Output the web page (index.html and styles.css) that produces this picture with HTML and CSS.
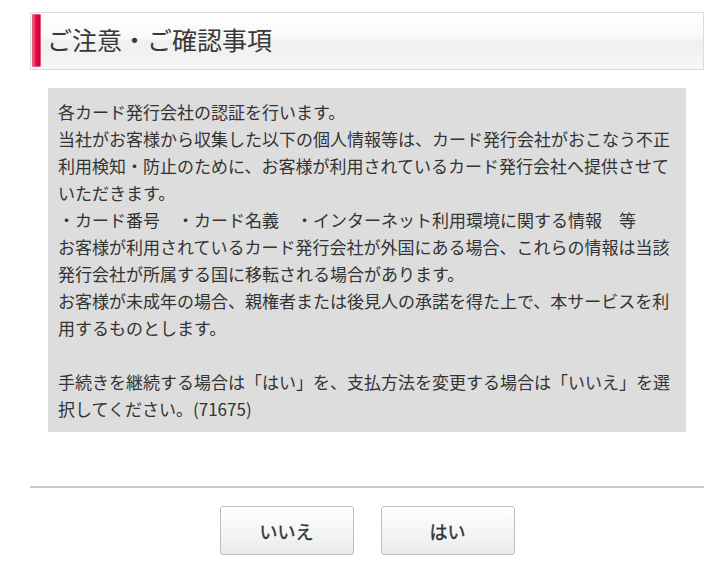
FILE: index.html
```html
<!DOCTYPE html>
<html lang="ja">
<head>
<meta charset="utf-8">
<title>ご注意・ご確認事項</title>
<link rel="stylesheet" href="styles.css">
</head>
<body>
<div class="page">
  <div class="heading">
    <span class="heading-bar"></span>
    <h1 class="heading-title">ご注意・ご確認事項</h1>
  </div>
  <div class="notice">
    <p>各カード発行会社の認証を行います。<br>当社がお客様から収集した以下の個人情報等は、カード発行会社がおこなう不正利用検知・防止のために、お客様が利用されているカード発行会社へ提供させていただきます。<br>・カード番号　・カード名義　・インターネット利用環境に関する情報　等<br>お客様が利用されているカード発行会社が外国にある場合、これらの情報は当該発行会社が所属する国に移転される場合があります。<br>お客様が未成年の場合、親権者または後見人の承諾を得た上で、本サービスを利用するものとします。<br><br>手続きを継続する場合は「はい」を、支払方法を変更する場合は「いいえ」を選択してください。(71675)</p>
  </div>
  <hr class="divider">
  <div class="actions">
    <button class="btn" type="button">いいえ</button>
    <button class="btn" type="button">はい</button>
  </div>
</div>
</body>
</html>
```
FILE: styles.css
```css
html, body {
  margin: 0;
  padding: 0;
  background: #fff;
}
body {
  font-family: "Noto Sans CJK JP", "Noto Sans", sans-serif;
  color: #333;
}
.page {
  margin-left: 30px;
  width: 674px;
  padding-top: 12px;
}
.heading {
  box-sizing: border-box;
  height: 58px;
  border: 1px solid #dcdcdc;
  background: linear-gradient(to bottom, #ffffff 0%, #f8f8f8 45%, #f0f0f0 50%, #f2f2f2 75%, #f7f7f7 100%);
  display: flex;
  align-items: center;
  padding: 1px 0 2px 1px;
}
.heading-bar {
  align-self: stretch;
  width: 9px;
  box-sizing: border-box;
  border: 1px solid #e8557a;
  border-radius: 1px;
  background: linear-gradient(to right, #f4678a 0%, #e0144a 40%, #cc0036 100%);
}
.heading-title {
  margin: 0 0 4px 6px;
  font-size: 25px;
  font-weight: normal;
  line-height: 30px;
  color: #383838;
}
.notice {
  margin: 18px 18px 0 18px;
  background: #dddddd;
  padding: 10px 10px;
}
.notice p {
  margin: 0;
  font-size: 17px;
  line-height: 27px;
  color: #333;
}
.divider {
  margin: 54px 0 0 0;
  border: 0;
  height: 2px;
  background: #cccccc;
}
.actions {
  display: flex;
  justify-content: center;
  gap: 27px;
  margin-top: 18px;
}
.btn {
  width: 134px;
  height: 49px;
  box-sizing: border-box;
  border: 1px solid #bdbdbd;
  border-radius: 3px;
  background: linear-gradient(to bottom, #ffffff 0%, #f6f6f6 50%, #ebebeb 100%);
  font-family: "Noto Sans CJK JP", "Noto Sans", sans-serif;
  font-size: 18px;
  font-weight: normal;
  -webkit-text-stroke: 0.4px #333;
  color: #333;
  padding: 0;
}
```
